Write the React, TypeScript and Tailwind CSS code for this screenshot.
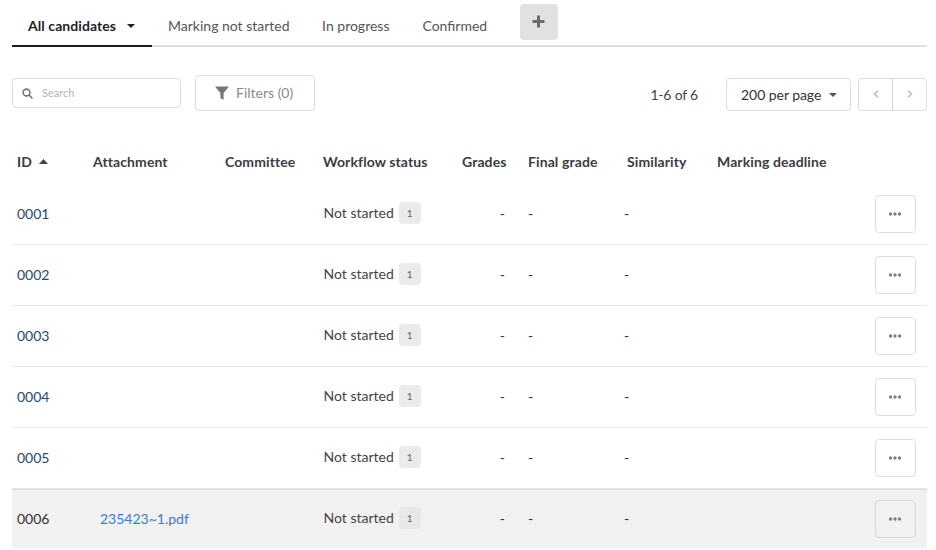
import React from "react";

const rows = ["0001", "0002", "0003", "0004", "0005", "0006"];
const cols = "grid grid-cols-[81px_132px_98px_139px_44px_99px_90px_1fr_52px]";

function Caret({ className = "" }: { className?: string }) {
  return (
    <svg width="8" height="4" viewBox="0 0 8 4" className={className}>
      <path d="M0 0h8L4 4z" fill="currentColor" />
    </svg>
  );
}

export default function App() {
  return (
    <div className="w-[936px] h-[550px] overflow-hidden bg-white pl-3 pr-[9px] font-['Lato',sans-serif] text-sm text-[#333]">
      <div className="flex h-[47px] border-b-2 border-[#e0e0e0]">
        <div className="flex h-[47px] w-[140px] items-center gap-[10px] border-b-2 border-[#1c1c1c] pl-4 pt-[6px] font-bold tracking-[0.07px] text-[#1f2328]">
          <span>All candidates</span>
          <Caret className="ml-[1px] text-[#222]" />
        </div>
        <div className="ml-4 flex h-[45px] items-center pt-[6px] text-[#555]">Marking not started</div>
        <div className="ml-[32.5px] flex h-[45px] items-center pt-[6px] text-[#555]">In progress</div>
        <div className="ml-[33px] flex h-[45px] items-center pt-[6px] text-[#555]">Confirmed</div>
        <div className="ml-[32.5px] mt-1 flex h-9 w-[38px] items-center justify-center rounded-[4px] bg-[#e0e1e2] pb-[2px] text-[#6b6b6b]">
          <svg width="13" height="13" viewBox="0 0 13 13">
            <path d="M5 .5h3v4.5h4.5v3H8v4.5H5V8H.5V5H5z" fill="currentColor" />
          </svg>
        </div>
      </div>

      <div className="mt-7 flex h-9 items-start">
        <div className="mt-[3px] flex h-[30px] w-[169px] items-center gap-[9px] rounded-[4px] border border-[#dedede] pl-[9px]">
          <svg width="11" height="11" viewBox="0 0 11 11" fill="none" stroke="#777" strokeWidth="1.6">
            <circle cx="4.5" cy="4.5" r="3.4" />
            <path d="M7 7l3.4 3.4" />
          </svg>
          <span className="text-[11px] text-[#b5b5b5]">Search</span>
        </div>
        <div className="ml-[14px] flex h-9 w-[120px] items-center gap-[7px] rounded-[4px] border border-[#dedede] pl-[19px] text-[#8a8a8a]">
          <svg width="14" height="14" viewBox="0 0 14 14">
            <path d="M0 .5h14L8.6 7v6.8l-3.2-1.6V7z" fill="#777" />
          </svg>
          <span>Filters (0)</span>
        </div>
        <div className="ml-auto flex items-start">
          <span className="mt-[10px] tracking-[-0.2px] text-[#444]">1-6 of 6</span>
          <div className="ml-7 mt-[3px] flex h-[33px] w-[125px] items-center gap-2 rounded-[4px] border border-[#dedede] pl-[14px] tracking-[-0.05px] text-[#333]">
            <span>200 per page</span>
            <Caret className="text-[#555]" />
          </div>
          <div className="ml-[7px] mt-[3px] flex h-[33px] w-[69px] rounded-[4px] border border-[#dedede] text-[#bbb]">
            <div className="flex flex-1 items-center justify-center border-r border-[#d5d5d5] pb-[2px]">
              <svg width="6" height="8" viewBox="0 0 6 8" fill="none" stroke="currentColor" strokeWidth="1.5">
                <path d="M5 .8L1.5 4 5 7.2" />
              </svg>
            </div>
            <div className="flex flex-1 items-center justify-center pb-[2px]">
              <svg width="6" height="8" viewBox="0 0 6 8" fill="none" stroke="currentColor" strokeWidth="1.5">
                <path d="M1 .8L4.5 4 1 7.2" />
              </svg>
            </div>
          </div>
        </div>
      </div>

      <div className={`${cols} mt-[39px] h-[34px] items-center pb-[11px] font-bold tracking-[0.1px] text-[#3a3d42]`}>
        <div className="flex items-center gap-[8px] pl-[5px]">
          <span>ID</span>
          <svg width="9" height="5" viewBox="0 0 9 5" className="-ml-[1px] text-[#444]">
            <path d="M0 5h9L4.5 0z" fill="currentColor" />
          </svg>
        </div>
        <div>Attachment</div>
        <div>Committee</div>
        <div>Workflow status</div>
        <div className="whitespace-nowrap">Grades</div>
        <div className="whitespace-nowrap pl-[22px]">Final grade</div>
        <div className="pl-[22px]">Similarity</div>
        <div className="whitespace-nowrap pl-[22px]">Marking deadline</div>
        <div />
      </div>

      {rows.map((id, i) => {
        const last = i === rows.length - 1;
        return (
          <div
            key={id}
            className={`${cols} items-center ${
              last ? "h-[59px] border-t border-[#dcdcdc] bg-[#f1f1f1]" : "h-[61px] border-b border-[#e8e8e8]"
            }`}
          >
            <div className={`pl-[5px] ${last ? "text-[#333]" : "text-[#234a6c]"}`}>{id}</div>
            <div className="pl-[7px]">
              {last ? <span className="text-[#2f80d0]">235423~1.pdf</span> : null}
            </div>
            <div />
            <div className="flex items-center gap-[5px] pb-[2px] pl-[0.5px] text-[#444]">
              <span>Not started</span>
              <span
                className={`flex h-[22px] w-[22px] items-center justify-center rounded-[4px] text-[10px] text-[#666] ${
                  last ? "bg-[#e8e8e8]" : "bg-[#ebebeb]"
                }`}
              >
                1
              </span>
            </div>
            <div className="pr-[1px] text-right">-</div>
            <div className="pl-[22px]">-</div>
            <div className="pl-[19px]">-</div>
            <div />
            <div className="flex justify-start">
              <div
                className={`flex h-[38px] w-[41px] items-center justify-center rounded-[4px] border ${
                  last ? "border-[#d5d5d5]" : "border-[#dedede]"
                }`}
              >
                <svg width="13" height="4" viewBox="0 0 13 4" fill="#7f7f7f" className="-translate-x-[0.5px]">
                  <circle cx="2" cy="2" r="1.7" />
                  <circle cx="6.5" cy="2" r="1.7" />
                  <circle cx="11" cy="2" r="1.7" />
                </svg>
              </div>
            </div>
          </div>
        );
      })}
    </div>
  );
}
